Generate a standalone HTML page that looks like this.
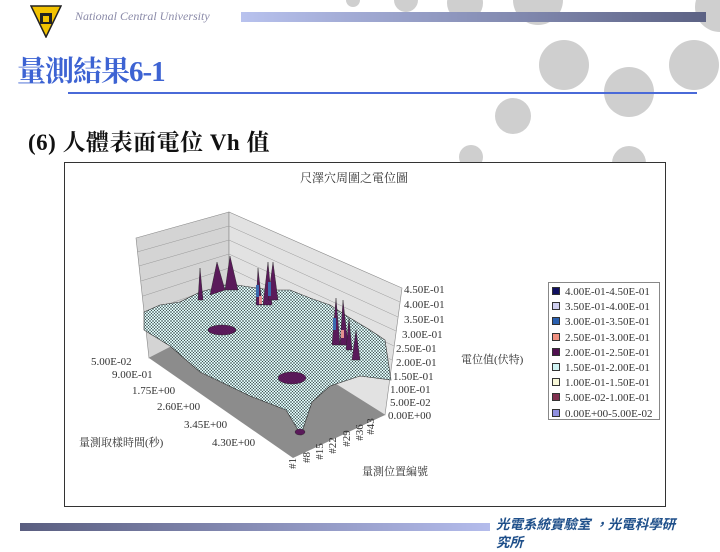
<!DOCTYPE html>
<html><head><meta charset="utf-8"><style>
body{margin:0;width:720px;height:540px;overflow:hidden;background:#fff;position:relative;font-family:"Liberation Serif","Noto Serif CJK SC",serif}
.c{position:absolute;background:#cfcfcf;border-radius:50%}
.a{position:absolute;font-size:11px;color:#333;white-space:nowrap;line-height:1}
</style></head><body>
<div class="c" style="left:539px;top:40px;width:50px;height:50px"></div>
<div class="c" style="left:669px;top:40px;width:50px;height:50px"></div>
<div class="c" style="left:604px;top:67px;width:50px;height:50px"></div>
<div class="c" style="left:495px;top:98px;width:36px;height:36px"></div>
<div class="c" style="left:459px;top:145px;width:24px;height:24px"></div>
<div class="c" style="left:612px;top:146px;width:34px;height:34px"></div>
<div class="c" style="left:513px;top:-25px;width:50px;height:50px"></div>
<div class="c" style="left:447px;top:-15px;width:36px;height:36px"></div>
<div class="c" style="left:394px;top:-12px;width:24px;height:24px"></div>
<div class="c" style="left:346px;top:-7px;width:14px;height:14px"></div>
<div class="c" style="left:695px;top:-18px;width:50px;height:50px"></div>
<svg style="position:absolute;left:30px;top:4px" width="32" height="34" viewBox="0 0 32 34"><polygon points="1,2 31,2 16,33" fill="#f2c200" stroke="#222" stroke-width="1.5"/><rect x="10" y="9" width="12" height="11" fill="#222"/><rect x="13" y="12" width="6" height="6" fill="#f2c200"/></svg>
<div style="position:absolute;left:75px;top:9px;font-style:italic;font-size:12px;color:#8a8aa8">National Central University</div>
<div style="position:absolute;left:241px;top:12px;width:465px;height:10px;background:linear-gradient(90deg,#b8c2ee,#5c6284)"></div>
<div style="position:absolute;left:17px;top:49px;font-size:29px;font-weight:bold;color:#3d63d3;letter-spacing:-1px">量測結果6-1</div>
<div style="position:absolute;left:68px;top:92px;width:629px;height:2px;background:#4a6ad8"></div>
<div style="position:absolute;left:28px;top:124px;font-size:23px;font-weight:bold;color:#111;letter-spacing:0.5px">(6) 人體表面電位 Vh 值</div>
<div style="position:absolute;left:64px;top:162px;width:600px;height:343px;border:1px solid #333;background:#fff"></div>
<svg style="position:absolute;left:0;top:0" width="720" height="540">
<defs><pattern id="m" width="3" height="3" patternUnits="userSpaceOnUse"><rect width="3" height="3" fill="#dcf6f6"/><path d="M0 0L3 3M3 0L0 3" stroke="#3a4a4a" stroke-width="0.5"/></pattern></defs>
<polygon points="136,238 229,212 229,317 149,358" fill="#d4d4d4" stroke="#888" stroke-width="0.6"/>
<polygon points="229,212 402,288 385,415 229,317" fill="#e2e2e2" stroke="#888" stroke-width="0.6"/>
<g stroke="#999" stroke-width="0.5"><line x1="137" y1="252" x2="229" y2="226"/><line x1="139" y1="266" x2="229" y2="240"/><line x1="141" y1="281" x2="229" y2="254"/><line x1="143" y1="296" x2="229" y2="268"/><line x1="145" y1="312" x2="229" y2="283"/><line x1="147" y1="328" x2="229" y2="298"/>
<line x1="229" y1="226" x2="400" y2="302"/><line x1="229" y1="240" x2="398" y2="317"/><line x1="229" y1="254" x2="396" y2="331"/><line x1="229" y1="268" x2="394" y2="346"/><line x1="229" y1="283" x2="392" y2="360"/><line x1="229" y1="298" x2="390" y2="374"/></g>
<polygon points="149,358 229,317 385,415 293,458" fill="#8c8c8c"/>
<polygon points="144,312 160,305 180,302 200,292 230,284 250,287 270,290 290,290 310,298 330,305 350,318 370,330 385,340 391,380 360,376 330,386 312,402 301,435 286,410 250,396 200,372 170,346 144,330" fill="url(#m)" stroke="#333" stroke-width="0.6"/>
<g fill="#5a1a5a" stroke="#222" stroke-width="0.4"><polygon points="198,300 200,268 203,300"/><polygon points="210,295 217,262 225,290"/><polygon points="225,290 230,256 238,290"/><polygon points="256,305 258,268 262,305"/><polygon points="263,305 268,262 272,305"/><polygon points="268,300 273,262 278,300"/><polygon points="332,345 336,298 340,345"/><polygon points="340,345 343,300 348,345"/><polygon points="346,350 349,318 352,350"/><polygon points="352,360 356,330 360,360"/><ellipse cx="222" cy="330" rx="14" ry="5"/><ellipse cx="292" cy="378" rx="14" ry="6"/><ellipse cx="300" cy="432" rx="5" ry="3"/></g>
<g fill="#3a6ab0"><rect x="256" y="285" width="3" height="12"/><rect x="268" y="282" width="3" height="14"/><rect x="333" y="318" width="3" height="12"/></g>
<g fill="#e49090"><rect x="259" y="296" width="3" height="8"/><rect x="341" y="330" width="3" height="8"/></g>
</svg>
<div class="a" style="left:300px;top:172px;font-size:12px">尺澤穴周圍之電位圖</div>
<div class="a" style="left:404px;top:285px">4.50E-01</div>
<div class="a" style="left:404px;top:300px">4.00E-01</div>
<div class="a" style="left:404px;top:315px">3.50E-01</div>
<div class="a" style="left:402px;top:330px">3.00E-01</div>
<div class="a" style="left:396px;top:344px">2.50E-01</div>
<div class="a" style="left:396px;top:358px">2.00E-01</div>
<div class="a" style="left:393px;top:372px">1.50E-01</div>
<div class="a" style="left:390px;top:385px">1.00E-01</div>
<div class="a" style="left:390px;top:398px">5.00E-02</div>
<div class="a" style="left:388px;top:411px">0.00E+00</div>
<div class="a" style="left:91px;top:357px">5.00E-02</div>
<div class="a" style="left:112px;top:370px">9.00E-01</div>
<div class="a" style="left:132px;top:386px">1.75E+00</div>
<div class="a" style="left:157px;top:402px">2.60E+00</div>
<div class="a" style="left:184px;top:420px">3.45E+00</div>
<div class="a" style="left:212px;top:438px">4.30E+00</div>
<div class="a" style="left:79px;top:438px">量測取樣時間(秒)</div>
<div class="a" style="left:461px;top:355px">電位值(伏特)</div>
<div class="a" style="left:362px;top:467px">量測位置編號</div>
<div class="a" style="left:288px;top:458px;transform:rotate(-90deg)">#1</div>
<div class="a" style="left:302px;top:452px;transform:rotate(-90deg)">#8</div>
<div class="a" style="left:312px;top:446px;transform:rotate(-90deg)">#15</div>
<div class="a" style="left:325px;top:440px;transform:rotate(-90deg)">#22</div>
<div class="a" style="left:339px;top:433px;transform:rotate(-90deg)">#29</div>
<div class="a" style="left:352px;top:427px;transform:rotate(-90deg)">#36</div>
<div class="a" style="left:363px;top:421px;transform:rotate(-90deg)">#43</div>
<div style="position:absolute;left:548px;top:282px;width:110px;height:136px;border:1px solid #888;background:#fff"></div>
<div style="position:absolute;left:552px;top:285px;font-size:11px;color:#333;line-height:15.2px">
<div><span style="display:inline-block;width:6px;height:6px;border:1px solid #333;background:#101060;margin-right:5px"></span>4.00E-01-4.50E-01</div>
<div><span style="display:inline-block;width:6px;height:6px;border:1px solid #333;background:#d0d0f0;margin-right:5px"></span>3.50E-01-4.00E-01</div>
<div><span style="display:inline-block;width:6px;height:6px;border:1px solid #333;background:#2a60b0;margin-right:5px"></span>3.00E-01-3.50E-01</div>
<div><span style="display:inline-block;width:6px;height:6px;border:1px solid #333;background:#f09080;margin-right:5px"></span>2.50E-01-3.00E-01</div>
<div><span style="display:inline-block;width:6px;height:6px;border:1px solid #333;background:#501050;margin-right:5px"></span>2.00E-01-2.50E-01</div>
<div><span style="display:inline-block;width:6px;height:6px;border:1px solid #333;background:#d0f4f4;margin-right:5px"></span>1.50E-01-2.00E-01</div>
<div><span style="display:inline-block;width:6px;height:6px;border:1px solid #333;background:#f8f8d8;margin-right:5px"></span>1.00E-01-1.50E-01</div>
<div><span style="display:inline-block;width:6px;height:6px;border:1px solid #333;background:#803050;margin-right:5px"></span>5.00E-02-1.00E-01</div>
<div><span style="display:inline-block;width:6px;height:6px;border:1px solid #333;background:#9090e0;margin-right:5px"></span>0.00E+00-5.00E-02</div>
</div>
<div style="position:absolute;left:20px;top:523px;width:470px;height:8px;background:linear-gradient(90deg,#5a5e80,#b4bcec)"></div>
<div style="position:absolute;left:496px;top:516px;width:190px;font-size:13.5px;font-style:italic;font-weight:bold;color:#1e4f8a;line-height:18px;font-family:'Liberation Sans','Noto Sans CJK TC',sans-serif">光電系統實驗室 ，光電科學研究所</div>
</body></html>
